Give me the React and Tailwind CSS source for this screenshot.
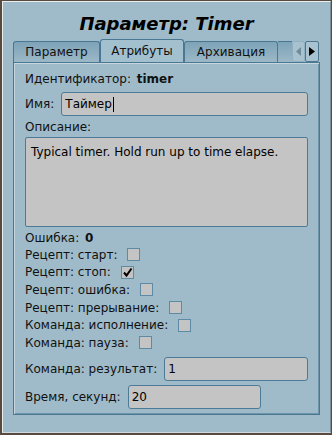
import React from 'react';

const font = { fontFamily: '"DejaVu Sans", Verdana, sans-serif' };

function Check({ checked }) {
  return (
    <span className="inline-flex h-[13px] w-[13px] shrink-0 items-center justify-center border border-[#5d8aa5] bg-[#c4c4c4]">
      {checked && (
        <svg width="11" height="11" viewBox="0 0 11 11">
          <path d="M2 5.5 L4.5 8.5 L9.5 1.5" fill="none" stroke="#000" strokeWidth="2" />
        </svg>
      )}
    </span>
  );
}

function Field({ value, className, cursor }) {
  return (
    <div className={`flex h-[24px] shrink-0 items-center rounded-[3px] border border-[#4c7b97] bg-[#c4c4c4] px-[3px] text-[12px] text-black ${className}`}>
      {value}
      {cursor && <span className="ml-[1px] inline-block h-[15px] w-[1px] bg-black" />}
    </div>
  );
}

export default function App() {
  const checks = [
    ['Рецепт: старт:', false],
    ['Рецепт: стоп:', true],
    ['Рецепт: ошибка:', false],
    ['Рецепт: прерывание:', false],
    ['Команда: исполнение:', false],
    ['Команда: пауза:', false],
  ];

  return (
    <div style={font} className="h-[435px] w-[332px] border-b-2 border-l-2 border-r border-t border-[#594a40] bg-[#9fbbc9] text-[#111]">
      <div className="flex h-full flex-col border-l border-t border-[#e9eef1] border-r border-r-[#7d8e98] border-b border-b-[#cfd8dc]">
        {/* Title */}
        <div className="flex h-[38px] shrink-0 items-center justify-center pt-[4px] text-[18px] font-bold italic text-black">
          Параметр: Timer
        </div>

        {/* Tabs */}
        <div className="ml-[10px] mr-[10px] flex h-[22px] shrink-0 items-end">
          <div className="flex h-[21px] w-[87px] items-center justify-center rounded-t-[3px] border border-b-0 border-[#4a7791] bg-gradient-to-b from-[#7ea3b8] to-[#9bb8c7] text-[12px]">
            Параметр
          </div>
          <div className="flex h-[23px] w-[84px] items-center justify-center rounded-t-[3px] border border-b-0 border-[#4a7791] bg-[#a3c0ce] text-[12px]">
            Атрибуты
          </div>
          <div className="flex h-[21px] w-[94px] items-center justify-center rounded-t-[3px] border border-b-0 border-[#4a7791] bg-gradient-to-b from-[#7ea3b8] to-[#9bb8c7] text-[12px]">
            Архивация
          </div>
          <div className="h-[21px] w-[14px] border-t border-[#4a7791] bg-gradient-to-b from-[#7ea3b8] to-[#9bb8c7]" />
          <div className="flex h-[21px] w-[13px] items-center justify-center rounded-[2px] border border-[#8fb0c1] bg-[#a9c2cf]">
            <svg width="6" height="9" viewBox="0 0 6 9"><path d="M5 0 L0 4.5 L5 9 Z" fill="#6f8c9c" /></svg>
          </div>
          <div className="flex h-[21px] w-[14px] items-center justify-center rounded-[2px] border border-[#4a7791] bg-[#a9c2cf]">
            <svg width="6" height="9" viewBox="0 0 6 9"><path d="M0 0 L6 4.5 L0 9 Z" fill="#000" /></svg>
          </div>
        </div>

        {/* Pane */}
        <div className="ml-[10px] mr-[10px] flex h-[353px] shrink-0 flex-col whitespace-nowrap border border-[#4a7791] bg-[#9fbbc9] px-[11px] pt-[8px] text-[12px] shadow-[inset_1px_1px_0_#c6d6de,inset_-1px_-1px_0_#6f95aa]">
          <div className="flex h-[16px] shrink-0 items-center">
            Идентификатор:&nbsp; <b className="ml-[2px]">timer</b>
          </div>
          <div className="mt-[5px] flex shrink-0 items-center">
            <span className="mr-[7px]">Имя:</span>
            <Field value="Таймер" cursor className="w-[247px]" />
          </div>
          <div className="mt-[2px] flex h-[17px] shrink-0 items-center">Описание:</div>
          <div className="mt-[2px] h-[90px] w-[283px] shrink-0 rounded-[2px] border border-[#4c7b97] bg-[#c4c4c4] px-[5px] pt-[5px] text-[12px] text-black">
            Typical timer. Hold run up to time elapse.
          </div>
          <div className="mt-[2px] flex h-[17px] shrink-0 items-center">
            Ошибка:&nbsp; <b className="ml-[2px]">0</b>
          </div>
          {checks.map(([label, checked]) => (
            <div key={label} className="flex h-[17.6px] shrink-0 items-center">
              <span className="mr-[10px]">{label}</span>
              <Check checked={checked} />
            </div>
          ))}
          <div className="mt-[5px] flex shrink-0 items-center">
            <span className="mr-[7px]">Команда: результат:</span>
            <Field value="1" className="w-[144px]" />
          </div>
          <div className="mt-[4px] flex shrink-0 items-center">
            <span className="mr-[7px]">Время, секунд:</span>
            <Field value="20" className="w-[133px]" />
          </div>
        </div>
      </div>
    </div>
  );
}
